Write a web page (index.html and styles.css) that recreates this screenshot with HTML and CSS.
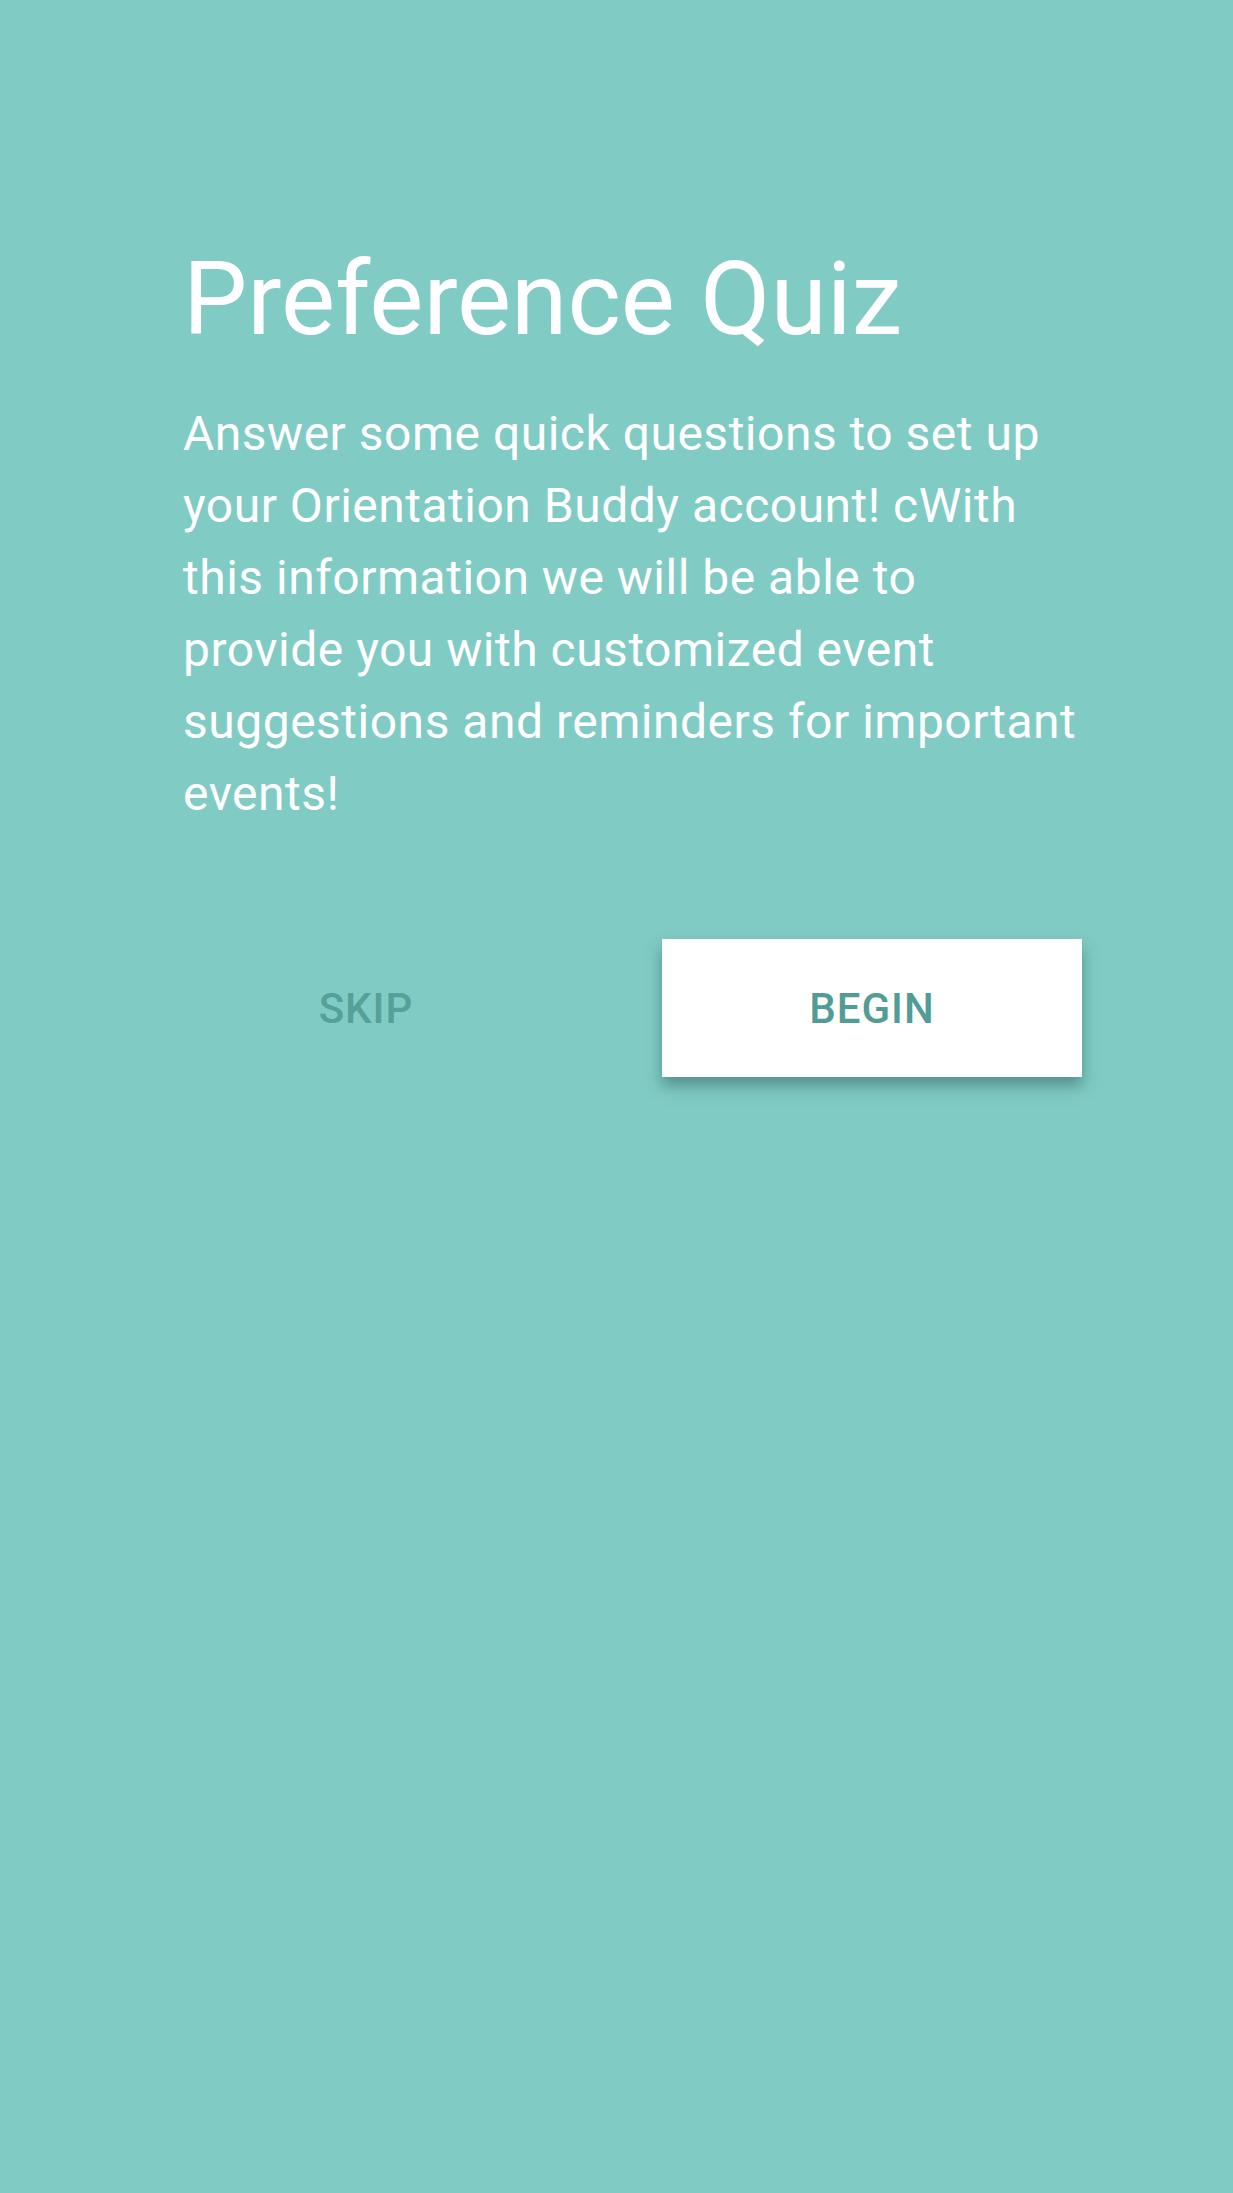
FILE: index.html
```html
<!DOCTYPE html>
<html>
<head>
<meta charset="utf-8">
<link rel="stylesheet" href="styles.css">
</head>
<body>
<main class="screen">
  <h1 class="title">Preference Quiz</h1>
  <p class="intro">Answer some quick questions to set up your Orientation Buddy account! cWith this information we will be able to provide you with customized event suggestions and reminders for important events!</p>
  <div class="actions">
    <button class="btn btn-skip">SKIP</button>
    <button class="btn btn-begin">BEGIN</button>
  </div>
</main>
</body>
</html>
```

FILE: styles.css
```css
html, body {
  margin: 0;
  padding: 0;
  background: #80cbc4;
}
body {
  width: 1233px;
  height: 2193px;
  font-family: Roboto, "Noto Sans", sans-serif;
}
.screen {
  padding: 234px 151px 0 183px;
  color: #ffffff;
}
.title {
  margin: 0;
  font-size: 102px;
  font-weight: 400;
  line-height: 130px;
}
.intro {
  margin: 34px 0 0 0;
  font-size: 48px;
  font-weight: 400;
  line-height: 72px;
  letter-spacing: 0.5px;
}
.actions {
  display: grid;
  grid-template-columns: 366px 420px;
  justify-content: space-between;
  margin-top: 109px;
}
.btn {
  border: 0;
  height: 138px;
  font-family: Roboto, "Noto Sans", sans-serif;
  font-size: 42px;
  font-weight: 500;
  letter-spacing: 1px;
  padding: 0;
}
.btn-skip {
  background: transparent;
  color: #55a099;
}
.btn-begin {
  background: #ffffff;
  color: #519c95;
  box-shadow: 0 9px 14px rgba(40, 90, 85, 0.5);
}
```
